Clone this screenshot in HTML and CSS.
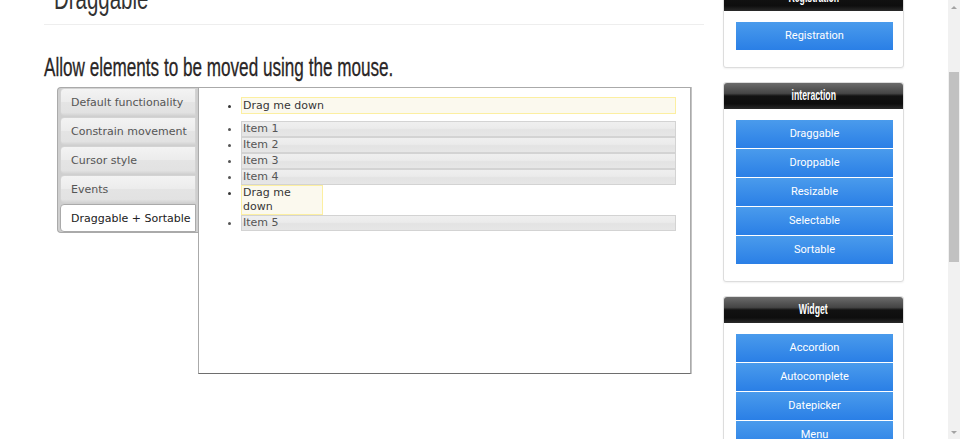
FILE: index.html
```html
<!DOCTYPE html>
<html lang="en">
<head>
<meta charset="utf-8">
<title>Draggable</title>
<link rel="stylesheet" href="styles.css">
</head>
<body>
<div class="viewport">
  <div class="page">
    <div class="layout">
      <main class="main">
        <h1 class="title"><span class="cond">Draggable</span></h1>
        <h2 class="lead"><span class="cond">Allow elements to be moved using the mouse.</span></h2>
        <div class="demo">
          <ul class="tabs-nav">
            <li class="tab">Default functionality</li>
            <li class="tab">Constrain movement</li>
            <li class="tab">Cursor style</li>
            <li class="tab">Events</li>
            <li class="tab active">Draggable + Sortable</li>
          </ul>
          <div class="panel">
            <ul class="drag-list">
              <li class="hl">Drag me down</li>
            </ul>
            <ul class="sort-list">
              <li class="item">Item 1</li>
              <li class="item">Item 2</li>
              <li class="item">Item 3</li>
              <li class="item">Item 4</li>
              <li class="hl narrow">Drag me down</li>
              <li class="item">Item 5</li>
            </ul>
          </div>
        </div>
      </main>
      <aside class="sidebar">
        <section class="box">
          <div class="box-head"><span class="cond-c">Registration</span></div>
          <div class="box-body">
            <a class="btn">Registration</a>
          </div>
        </section>
        <section class="box">
          <div class="box-head"><span class="cond-c">interaction</span></div>
          <div class="box-body">
            <a class="btn">Draggable</a>
            <a class="btn">Droppable</a>
            <a class="btn">Resizable</a>
            <a class="btn">Selectable</a>
            <a class="btn">Sortable</a>
          </div>
        </section>
        <section class="box">
          <div class="box-head"><span class="cond-c">Widget</span></div>
          <div class="box-body">
            <a class="btn">Accordion</a>
            <a class="btn">Autocomplete</a>
            <a class="btn">Datepicker</a>
            <a class="btn">Menu</a>
            <a class="btn">Progressbar</a>
          </div>
        </section>
      </aside>
    </div>
  </div>
  <div class="scrollbar">
    <div class="sb-arrow"><span class="tri-up"></span></div>
    <div class="sb-track"><div class="sb-thumb"></div></div>
    <div class="sb-arrow"><span class="tri-down"></span></div>
  </div>
</div>
</body>
</html>
```

FILE: styles.css
```css
html, body {
  margin: 0;
  padding: 0;
  height: 100%;
  overflow: hidden;
  background: #fff;
}

.viewport {
  display: flex;
  height: 439px;
}

.page {
  flex: 1;
  overflow: hidden;
}

.layout {
  display: flex;
  align-items: flex-start;
  gap: 19px;
  margin-top: -16px;
  padding-left: 44px;
}

.main {
  width: 660px;
  flex: none;
}

/* condensed look standing in for the Oswald face */
.cond {
  display: inline-block;
  transform-origin: left center;
  white-space: nowrap;
}

.cond-c {
  display: inline-block;
  transform: scaleX(0.62);
  transform-origin: center center;
  white-space: nowrap;
}

.title {
  margin: 0;
  padding: 0 0 10px 10px;
  font-family: "Liberation Sans", Arial, sans-serif;
  font-weight: normal;
  font-size: 31px;
  line-height: 30px;
  color: #333;
  border-bottom: 1px solid #eee;
}

.title .cond {
  transform: scaleX(0.66);
}

.lead {
  margin: 29px 0 7px 0;
  font-family: "Liberation Sans", Arial, sans-serif;
  font-weight: normal;
  font-size: 25px;
  line-height: 26px;
  color: #2a2626;
  -webkit-text-stroke: 0.3px #2a2626;
}

.lead .cond {
  transform: scaleX(0.685);
}

.demo {
  display: flex;
  align-items: flex-start;
  margin-left: 13px;
}

.tabs-nav {
  box-sizing: border-box;
  width: 141px;
  margin: 0;
  padding: 0 2px 0 2px;
  list-style: none;
  background: #cfcfcf;
  border: 1px solid #aaa;
  border-right: none;
  border-radius: 4px 0 0 4px;
  display: flex;
  flex-direction: column;
  gap: 1px;
}

.tab {
  box-sizing: border-box;
  height: 28px;
  padding: 0 0 0 10px;
  font-family: "DejaVu Sans", Verdana, sans-serif;
  font-size: 11px;
  line-height: 27px;
  color: #555;
  border: 1px solid #d3d3d3;
  border-radius: 4px 0 0 4px;
  background: linear-gradient(#f3f3f3 0%, #ececec 48%, #e4e4e4 52%, #e2e2e2 90%, #d6d6d6 100%);
  white-space: nowrap;
}

.tab.active {
  background: #fff;
  border-color: #aaa;
  color: #212121;
}

.panel {
  box-sizing: border-box;
  width: 493px;
  height: 287px;
  border: 1px solid #aaa;
  border-bottom-color: #6e6e6e;
  box-shadow: 1px 0 0 #c4c4c4;
  background: #fff;
  font-family: "DejaVu Sans", Verdana, sans-serif;
  font-size: 11px;
  line-height: 14px;
}

.drag-list,
.sort-list {
  margin: 0;
  padding: 0 14px 0 42px;
  list-style: disc;
  color: #222;
}

.drag-list {
  padding-top: 9px;
}

.sort-list {
  margin-top: 7px;
}

.drag-list li,
.sort-list li {
  padding-left: 1px;
}

.hl {
  background: #fbf9ee;
  border: 1px solid #fcefa1;
  color: #363636;
}

.drag-list .hl {
  line-height: 15px;
}

.item {
  border: 1px solid #d3d3d3;
  background: linear-gradient(#efefef 0%, #ebebeb 45%, #e3e3e3 55%, #e6e6e6 100%);
  color: #555;
}

.narrow {
  box-sizing: border-box;
  width: 82px;
  padding-right: 22px;
}

.sidebar {
  width: 181px;
  flex: none;
  display: flex;
  flex-direction: column;
  gap: 14px;
}

.box {
  background: #fff;
  border: 1px solid #ddd;
  border-radius: 3px;
  box-shadow: 0 1px 2px rgba(0, 0, 0, 0.06);
}

.box-head {
  height: 26px;
  line-height: 25px;
  text-align: center;
  color: #fff;
  font-family: "Liberation Sans", Arial, sans-serif;
  font-weight: bold;
  font-size: 14px;
  border-radius: 3px 3px 0 0;
  background: linear-gradient(#6b6b6b 0%, #454545 40%, #121212 50%, #0e0e0e 80%, #2a2a2a 100%);
}

.box-body {
  padding: 11px 10px 17px 12px;
  display: flex;
  flex-direction: column;
  gap: 1px;
}

.btn {
  display: block;
  width: 157px;
  height: 28px;
  line-height: 28px;
  text-align: center;
  color: #fff;
  font-family: Roboto, "Liberation Sans", sans-serif;
  font-size: 11px;
  background: linear-gradient(#4a9bec 0%, #2a7fe6 100%);
}

.scrollbar {
  width: 12px;
  flex: none;
  background: #f1f1f1;
  display: flex;
  flex-direction: column;
}

.sb-arrow {
  height: 14px;
  display: flex;
  align-items: center;
  justify-content: center;
}

.tri-up {
  width: 0;
  height: 0;
  border-left: 3px solid transparent;
  border-right: 3px solid transparent;
  border-bottom: 3px solid #a3a3a3;
}

.tri-down {
  width: 0;
  height: 0;
  border-left: 3px solid transparent;
  border-right: 3px solid transparent;
  border-top: 3px solid #a3a3a3;
}

.sb-track {
  flex: 1;
}

.sb-thumb {
  margin: 58px 1px 0 1px;
  height: 190px;
  background: #c1c1c1;
}
```
